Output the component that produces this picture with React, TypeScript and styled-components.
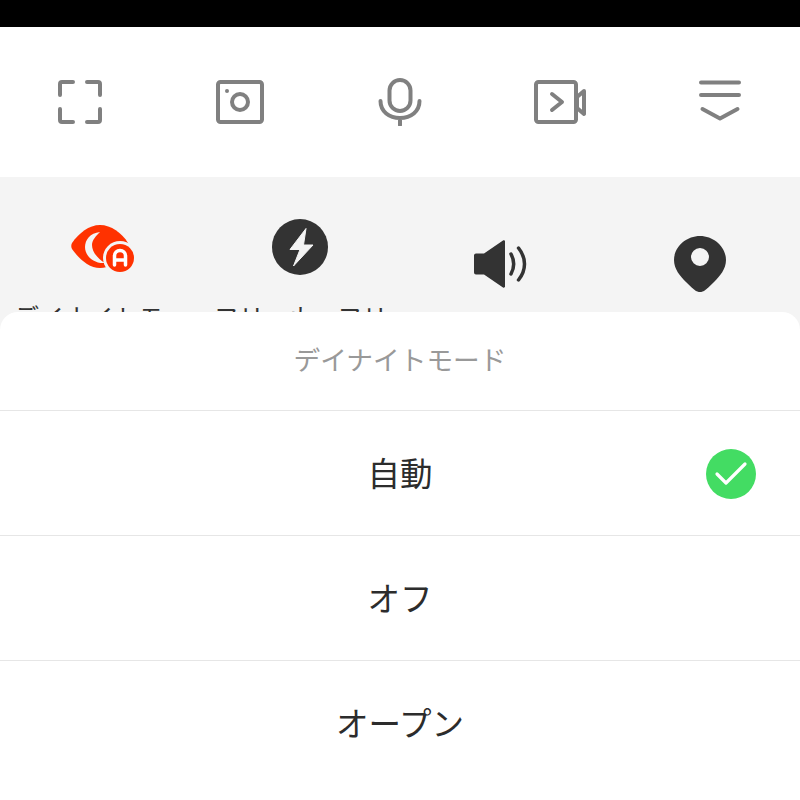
import { createGlobalStyle, styled } from 'styled-components';

const Global = createGlobalStyle`
  html, body { margin: 0; padding: 0; background: #fff; }
  body { font-family: "Noto Sans CJK JP", "Noto Sans", sans-serif; }
`;

const Screen = styled.div`
  position: relative;
  width: 800px;
  height: 800px;
  overflow: hidden;
  background: #fff;
`;

const StatusBar = styled.div`
  height: 27px;
  background: #000;
`;

const Toolbar = styled.div`
  display: grid;
  grid-template-columns: repeat(5, 160px);
  height: 150px;
`;

const ToolCell = styled.div`
  display: flex;
  justify-content: center;
  align-items: center;
`;

const QuickPanel = styled.div`
  display: grid;
  grid-template-columns: repeat(4, 200px);
  height: 300px;
  background: #f4f4f4;
`;

const QuickItem = styled.div`
  display: flex;
  flex-direction: column;
  align-items: center;
`;

const IconSlot = styled.div<{ $low?: boolean }>`
  display: flex;
  justify-content: center;
  align-items: center;
  width: 100%;
  height: 70px;
  margin-top: ${p => (p.$low ? 52 : 35)}px;
`;

const QuickLabel = styled.div`
  align-self: flex-start;
  margin: 16px 0 0 14px;
  width: 176px;
  font-size: 25px;
  line-height: 36px;
  color: #333;
  white-space: nowrap;
  overflow: hidden;
`;

const Sheet = styled.div`
  position: absolute;
  left: 0;
  right: 0;
  top: 312px;
  bottom: 0;
  background: #fff;
  border-radius: 18px 18px 0 0;
  display: flex;
  flex-direction: column;
`;

const SheetTitle = styled.div`
  height: 92px;
  padding-bottom: 6px;
  display: flex;
  align-items: center;
  justify-content: center;
  font-size: 26.7px;
  color: #999;
  border-bottom: 1px solid #e6e6e6;
`;

const Option = styled.div`
  position: relative;
  height: 120px;
  padding-bottom: 4px;
  display: flex;
  align-items: center;
  justify-content: center;
  font-size: 32.5px;
  color: #2c2c2c;
  border-bottom: 1px solid #e6e6e6;
  &:last-child { border-bottom: none; }
`;

const CheckBadge = styled.svg`
  position: absolute;
  right: 44px;
  top: 38px;
`;

const stroke = { fill: 'none', stroke: '#808080', strokeWidth: 4, strokeLinecap: 'round', strokeLinejoin: 'round' } as const;

const ScanIcon = () => (
  <svg width="44" height="44" viewBox="0 0 44 44" {...stroke}>
    <path d="M2 15V4a2 2 0 0 1 2-2h11M29 2h11a2 2 0 0 1 2 2v11M42 29v11a2 2 0 0 1-2 2H29M15 42H4a2 2 0 0 1-2-2V29" />
  </svg>
);

const PhotoIcon = () => (
  <svg width="48" height="44" viewBox="0 0 48 44" {...stroke}>
    <rect x="2" y="2" width="44" height="40" rx="2.5" />
    <circle cx="24" cy="22" r="8" />
    <circle cx="11" cy="11" r="2" fill="#808080" stroke="none" />
  </svg>
);

const MicIcon = () => (
  <svg width="44" height="48" viewBox="0 0 44 48" {...stroke}>
    <rect x="11.5" y="2" width="21" height="31" rx="10.5" />
    <path d="M2.5 23c0 10.5 8.7 17 19.5 17s19.500-6.500 19.500-17M22 40v7" />
  </svg>
);

const VideoIcon = () => (
  <svg width="52" height="44" viewBox="0 0 52 44" {...stroke}>
    <rect x="2" y="2" width="40" height="40" rx="2.5" />
    <path d="M18 14l10 8-10 8M50 11L43 17V28L50 34z" />
  </svg>
);

const CollapseIcon = () => (
  <svg width="44" height="44" viewBox="0 0 44 44" {...stroke}>
    <path d="M3 2.500h38M3 15h38M4.500 29L22 38.500 39.500 29" />
  </svg>
);

const EyeIcon = () => (
  <svg width="72" height="50" viewBox="-6 -2 72 50">
    <path d="M2 19C9 9 19 1 30 1c11 0 22 8 28 18 1 2 1 4 0 6C52 35 41 44 30 44 19 44 9 35 2 25c-1-2-1-4 0-6z" fill="#ff3200" />
    <path d="M30 8C20 9 15 16 15 23c0 9 9 17 20 16-7-4-13-11-13-18 0-5 4-9 8-13z" fill="#f4f4f4" />
    <circle cx="50" cy="34" r="17" fill="#f4f4f4" />
    <circle cx="50" cy="34" r="14" fill="#ff3200" />
    <path d="M44.500 41V32a5.500 5.500 0 0 1 11 0v9M44.500 36h11" fill="none" stroke="#fff" strokeWidth="3.500" strokeLinecap="round" strokeLinejoin="round" />
  </svg>
);

const BoltIcon = () => (
  <svg width="56" height="56" viewBox="0 0 56 56">
    <circle cx="28" cy="28" r="28" fill="#333" />
    <path d="M34 9.500L18 30.500h10L21.500 47 41 26H31.500z" fill="#f4f4f4" stroke="#f4f4f4" strokeWidth="1" strokeLinejoin="round" />
  </svg>
);

const SpeakerIcon = () => (
  <svg width="54" height="48" viewBox="0 0 54 48">
    <path d="M3 13.500h8L30 .500c1-.500 2 0 2 1v45c0 1-1 1.500-2 1L11 34.500H3a2 2 0 0 1-2-2v-17a2 2 0 0 1 2-2z" fill="#333" />
    <path d="M38 14c3.500 6.500 3.500 13.500 0 20M45.500 8c8 10 8 22 0 32" fill="none" stroke="#333" strokeWidth="3.500" strokeLinecap="round" />
  </svg>
);

const PinIcon = () => (
  <svg width="52" height="56" viewBox="0 0 52 56">
    <path fillRule="evenodd" d="M26 0c14 0 26 11 26 24 0 9-6 16-12 22-4 4-7 7-10 9-3 1.500-5 1.500-8 0-3-2-6-5-10-9C6 40 0 33 0 24 0 11 12 0 26 0zm0 12a9 9 0 1 0 0 18 9 9 0 0 0 0-18z" fill="#333" />
  </svg>
);

const tools = [ScanIcon, PhotoIcon, MicIcon, VideoIcon, CollapseIcon];

export default function App() {
  return (
    <Screen>
      <Global />
      <StatusBar />
      <Toolbar>
        {tools.map((Icon, i) => (
          <ToolCell key={i}><Icon /></ToolCell>
        ))}
      </Toolbar>
      <QuickPanel>
        <QuickItem>
          <IconSlot><EyeIcon /></IconSlot>
          <QuickLabel>デイナイトモード</QuickLabel>
        </QuickItem>
        <QuickItem>
          <IconSlot><BoltIcon /></IconSlot>
          <QuickLabel>フリッカーフリー</QuickLabel>
        </QuickItem>
        <QuickItem>
          <IconSlot $low><SpeakerIcon /></IconSlot>
        </QuickItem>
        <QuickItem>
          <IconSlot $low><PinIcon /></IconSlot>
        </QuickItem>
      </QuickPanel>
      <Sheet>
        <SheetTitle>デイナイトモード</SheetTitle>
        <Option>
          自動
          <CheckBadge width="50" height="50" viewBox="0 0 50 50">
            <circle cx="25" cy="25" r="25" fill="#43dc63" />
            <path d="M11 25l9 9 19-19" fill="none" stroke="#fff" strokeWidth="3.200" strokeLinecap="round" strokeLinejoin="round" />
          </CheckBadge>
        </Option>
        <Option>オフ</Option>
        <Option>オープン</Option>
      </Sheet>
    </Screen>
  );
}
